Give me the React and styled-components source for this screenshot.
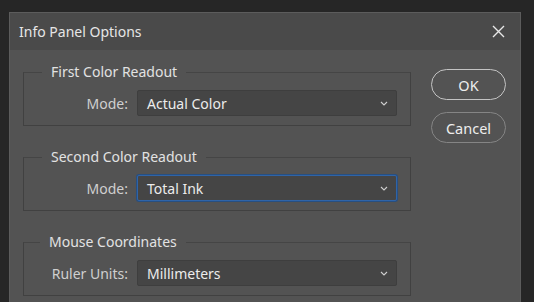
import React, { useState } from "react";
import styled, { createGlobalStyle } from "styled-components";

const GlobalStyle = createGlobalStyle`
  html, body {
    margin: 0;
    padding: 0;
    background: #262626;
    overflow: hidden;
  }
  body {
    font-family: "Noto Sans", "Open Sans", sans-serif;
  }
`;

const Screen = styled.div`
  width: 534px;
  height: 302px;
  padding: 12px 0 0 9px;
  box-sizing: border-box;
  overflow: hidden;
`;

const Dialog = styled.div`
  width: 512px;
  height: 320px;
  background: #535353;
  border: 1px solid #5c5c5c;
  box-sizing: border-box;
`;

const TitleBar = styled.div`
  height: 37px;
  background: #4a4a4a;
  display: flex;
  align-items: center;
  justify-content: space-between;
  padding: 0 14px 0 9px;
  color: #e6e6e6;
  font-size: 14px;
`;

const CloseButton = styled.button`
  background: none;
  border: none;
  padding: 0;
  width: 16px;
  height: 16px;
  display: flex;
  align-items: center;
  justify-content: center;
  cursor: pointer;
`;

const Body = styled.div`
  display: flex;
  padding: 12px 14px 0 13px;
  gap: 20px;
`;

const Groups = styled.div`
  width: 388px;
  display: flex;
  flex-direction: column;
  gap: 21px;
`;

const Group = styled.fieldset`
  margin: 0;
  padding: 0 0 9px 0;
  border: 1px solid #414141;
  border-top-color: #454545;
  min-width: 0;
`;

const Legend = styled.legend`
  margin-left: ${(p) => p.$indent}px;
  padding: 0 9px;
  color: #e2e2e2;
  font-size: 14px;
  line-height: 20px;
`;

const Row = styled.div`
  display: flex;
  align-items: center;
  margin-top: 8px;
`;

const Label = styled.label`
  width: 104px;
  text-align: right;
  color: #cfcfcf;
  font-size: 14px;
  margin-right: 9px;
`;

const SelectBox = styled.div`
  width: 260px;
  height: 26px;
  box-sizing: border-box;
  background: #454545;
  border: 1px solid ${(p) => (p.$focused ? "#2f64a8" : "#3e3e3e")};
  box-shadow: ${(p) => (p.$focused ? "0 0 0 1px #284f80" : "none")};
  border-radius: 2px;
  display: flex;
  align-items: center;
  justify-content: space-between;
  padding: 0 8px 0 9px;
  color: #ececec;
  font-size: 14px;
  cursor: default;
`;

const Buttons = styled.div`
  display: flex;
  flex-direction: column;
  gap: 12px;
  padding-top: 7px;
`;

const PillButton = styled.button`
  width: 75px;
  height: 31px;
  box-sizing: border-box;
  border-radius: 16px;
  background: transparent;
  border: ${(p) => (p.$primary ? "1.5px solid #c4c4c4" : "1px solid #858585")};
  color: #ededed;
  font-family: inherit;
  font-size: 14.5px;
  padding: 0;
  cursor: pointer;
`;

const Chevron = () => (
  <svg width="8" height="5" viewBox="0 0 8 5">
    <path d="M1 1 L4 4 L7 1" fill="none" stroke="#cfcfcf" strokeWidth="1.1" />
  </svg>
);

const Select = ({ value, focused }) => (
  <SelectBox $focused={focused}>
    <span>{value}</span>
    <Chevron />
  </SelectBox>
);

const groups = [
  { title: "First Color Readout", label: "Mode:", value: "Actual Color", indent: 18 },
  { title: "Second Color Readout", label: "Mode:", value: "Total Ink", indent: 18, focused: true },
  { title: "Mouse Coordinates", label: "Ruler Units:", value: "Millimeters", indent: 16 },
];

const App = () => {
  const [open] = useState(true);
  if (!open) return null;

  return (
    <>
      <GlobalStyle />
      <Screen>
        <Dialog>
          <TitleBar>
            <span>Info Panel Options</span>
            <CloseButton aria-label="Close">
              <svg width="13" height="13" viewBox="0 0 13 13">
                <path d="M1 1 L12 12 M12 1 L1 12" stroke="#e8e8e8" strokeWidth="1.4" />
              </svg>
            </CloseButton>
          </TitleBar>
          <Body>
            <Groups>
              {groups.map((g) => (
                <Group key={g.title}>
                  <Legend $indent={g.indent}>{g.title}</Legend>
                  <Row>
                    <Label>{g.label}</Label>
                    <Select value={g.value} focused={g.focused} />
                  </Row>
                </Group>
              ))}
            </Groups>
            <Buttons>
              <PillButton $primary>OK</PillButton>
              <PillButton>Cancel</PillButton>
            </Buttons>
          </Body>
        </Dialog>
      </Screen>
    </>
  );
};

export default App;
